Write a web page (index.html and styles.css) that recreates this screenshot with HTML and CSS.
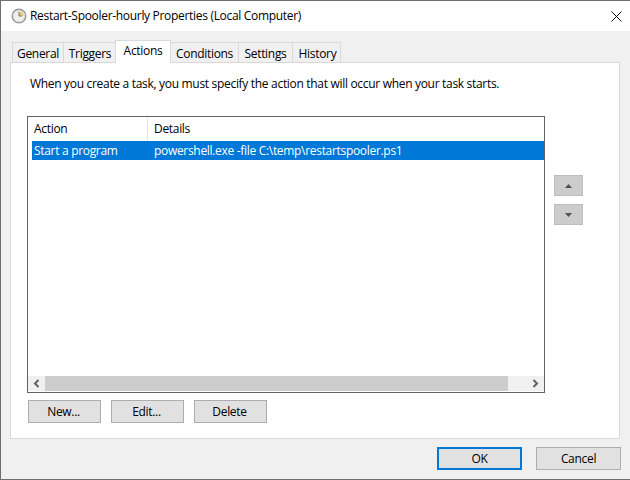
FILE: index.html
```html
<!DOCTYPE html>
<html lang="en">
<head>
    <meta charset="UTF-8">
    <meta name="viewport" content="width=device-width, initial-scale=1.0">
    <title>Restart-Spooler-hourly Properties (Local Computer)</title>
    <link rel="stylesheet" href="styles.css">
</head>
<body>
    <div class="dialog">
        <div class="titlebar">
            <svg class="clock" width="16" height="16" viewBox="0 0 16 16">
                <circle cx="8" cy="8" r="6.9" fill="#d8d8d8" stroke="#8f9397" stroke-width="1.2"/>
                <circle cx="8" cy="8" r="5.2" fill="#f1f0e8"/>
                <path d="M8 3.2A4.8 4.8 0 0 1 12.8 8H8Z" fill="#eccb7c"/>
                <path d="M8 4v4h3" fill="none" stroke="#777" stroke-width="1"/>
            </svg>
            <span class="title">Restart-Spooler-hourly Properties (Local Computer)</span>
            <svg class="close" width="11" height="11" viewBox="0 0 11 11">
                <path d="M0.5 0.5l10 10M10.5 0.5l-10 10" stroke="#111" stroke-width="1" fill="none"/>
            </svg>
        </div>

        <div class="content">
            <div class="tabs">
                <div class="tab tab-general">General</div>
                <div class="tab tab-triggers">Triggers</div>
                <div class="tab tab-actions active">Actions</div>
                <div class="tab tab-conditions">Conditions</div>
                <div class="tab tab-settings">Settings</div>
                <div class="tab tab-history">History</div>
            </div>

            <div class="panel">
                <p class="intro">When you create a task, you must specify the action that will occur when your task starts.</p>

                <div class="list-row">
                    <div class="list">
                        <div class="list-head">
                            <div class="col-action">Action</div>
                            <div class="col-details">Details</div>
                        </div>
                        <div class="list-item">
                            <div class="col-action">Start a program</div>
                            <div class="col-details">powershell.exe -file C:\temp\restartspooler.ps1</div>
                        </div>
                        <div class="list-body"></div>
                        <div class="hscroll">
                            <div class="arrow">
                                <svg width="8" height="9" viewBox="0 0 8 9"><path d="M5.5 1L2 4.5 5.5 8" fill="none" stroke="#606060" stroke-width="2"/></svg>
                            </div>
                            <div class="thumb"></div>
                            <div class="arrow">
                                <svg width="8" height="9" viewBox="0 0 8 9"><path d="M2.5 1L6 4.5 2.5 8" fill="none" stroke="#606060" stroke-width="2"/></svg>
                            </div>
                        </div>
                    </div>
                    <div class="order">
                        <div class="order-btn">
                            <svg width="7" height="4" viewBox="0 0 7 4"><path d="M3.5 0L7 4H0Z" fill="#505050"/></svg>
                        </div>
                        <div class="order-btn">
                            <svg width="7" height="4" viewBox="0 0 7 4"><path d="M0 0H7L3.5 4Z" fill="#505050"/></svg>
                        </div>
                    </div>
                </div>

                <div class="list-buttons">
                    <div class="btn">New...</div>
                    <div class="btn">Edit...</div>
                    <div class="btn">Delete</div>
                </div>
            </div>

            <div class="footer">
                <div class="btn btn-wide btn-default">OK</div>
                <div class="btn btn-wide">Cancel</div>
            </div>
        </div>
    </div>
</body>
</html>
```

FILE: styles.css
```css
html, body {
    margin: 0;
    padding: 0;
    height: 100%;
    overflow: hidden;
}
body {
    font-family: "Open Sans", "Noto Sans", sans-serif;
    font-size: 12px;
    letter-spacing: -0.31px;
    color: #000;
    background: #fff;
}
.dialog {
    width: 630px;
    height: 480px;
    box-sizing: border-box;
    border-left: 1px solid #6e6e6e;
    border-top: 1px solid #6e6e6e;
    border-bottom: 1px solid #6e6e6e;
    display: flex;
    flex-direction: column;
}
.titlebar {
    height: 30px;
    box-sizing: border-box;
    display: flex;
    align-items: center;
    background: #fff;
    padding: 0 8px 1px 10px;
}
.clock {
    margin-top: 1px;
}
.close {
    margin-top: 1px;
}
.title {
    margin-left: 3px;
    flex: 1;
}
.content {
    flex: 1;
    background: #f0f0f0;
    padding: 9px 9px 0 9px;
    display: flex;
    flex-direction: column;
}
.tabs {
    display: flex;
    height: 22px;
    align-items: flex-end;
    padding-left: 2px;
    position: relative;
    z-index: 1;
}
.tab {
    height: 20px;
    box-sizing: border-box;
    border: 1px solid #d9d9d9;
    border-bottom: none;
    border-right: none;
    background: #f0f0f0;
    text-align: center;
    line-height: 21px;
}
.tab-general { width: 51px; }
.tab-triggers { width: 52px; padding-left: 1px; }
.tab-actions { width: 56px; }
.tab-conditions { width: 68px; }
.tab-settings { width: 54px; }
.tab-history { width: 49px; padding-left: 2px; border-right: 1px solid #d9d9d9; }
.tab.active {
    height: 23px;
    margin-bottom: -1px;
    margin-right: -1px;
    position: relative;
    z-index: 1;
    background: #fff;
    border-right: 1px solid #d9d9d9;
    line-height: 20px;
}
.panel {
    width: 610px;
    height: 377px;
    box-sizing: border-box;
    background: #fff;
    border: 1px solid #d9d9d9;
    padding: 12px 0 0 16px;
}
.intro {
    margin: 0 0 23px 3px;
    line-height: 18px;
}
.list-row {
    display: flex;
    align-items: flex-start;
}
.list {
    width: 518px;
    height: 277px;
    box-sizing: border-box;
    border: 1px solid #646464;
    display: flex;
    flex-direction: column;
}
.list-head {
    display: flex;
    height: 24px;
    line-height: 24px;
}
.list-head .col-action {
    border-right: 1px solid #e5e5e5;
}
.list-item {
    display: flex;
    height: 19px;
    margin-left: 4px;
    line-height: 19px;
    background: #0078d7;
    color: #fff;
}
.col-action {
    width: 120px;
    box-sizing: border-box;
    padding-left: 6px;
}
.list-item .col-action {
    width: 116px;
    padding-left: 2px;
}
.col-details {
    padding-left: 6px;
}
.list-body {
    flex: 1;
}
.hscroll {
    display: flex;
    height: 15px;
    margin-bottom: 1px;
    background: #f0f0f0;
}
.arrow {
    width: 17px;
    display: flex;
    align-items: center;
    justify-content: center;
}
.thumb {
    width: 463px;
    background: #cdcdcd;
}
.hscroll .arrow:last-child {
    flex: 1;
    padding-left: 18px;
}
.order {
    display: flex;
    flex-direction: column;
    gap: 8px;
    margin: 59px 0 0 9px;
}
.order-btn {
    width: 29px;
    height: 21px;
    box-sizing: border-box;
    background: #cccccc;
    border: 1px solid #bdbdbd;
    display: flex;
    align-items: center;
    justify-content: center;
}
.btn {
    box-sizing: border-box;
    width: 73px;
    height: 23px;
    background: #e1e1e1;
    border: 1px solid #adadad;
    text-align: center;
    line-height: 21px;
}
.list-buttons {
    display: flex;
    gap: 10px;
    margin: 7px 0 0 1px;
}
.list-buttons .btn {
    padding-right: 2px;
}
.footer {
    display: flex;
    justify-content: flex-end;
    gap: 14px;
    margin-top: 8px;
}
.btn-wide {
    width: 85px;
}
.btn-default {
    border: 2px solid #0078d7;
    line-height: 19px;
}
```
